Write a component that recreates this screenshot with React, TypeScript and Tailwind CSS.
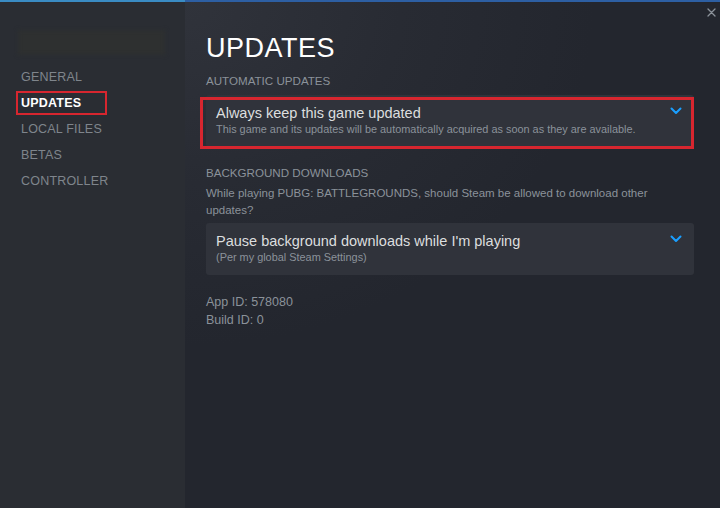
import React from "react"

const navItems = ["GENERAL", "UPDATES", "LOCAL FILES", "BETAS", "CONTROLLER"]

function Chevron() {
  return (
    <svg width="12" height="8" viewBox="0 0 12 8" className="mt-[3px] shrink-0">
      <path d="M1.5 1.5 L6 6 L10.5 1.5" fill="none" stroke="#1a9fff" strokeWidth="2" strokeLinecap="round" strokeLinejoin="round" />
    </svg>
  )
}

interface DropdownProps {
  title: string
  subtitle: string
  highlighted?: boolean
}

function Dropdown({ title, subtitle, highlighted }: DropdownProps) {
  return (
    <div className="relative">
      <div className="flex items-start justify-between bg-[#30333b] rounded-[3px] pl-[10px] pr-[12px] pt-[9px] pb-[11px]">
        <div className="flex flex-col">
          <span className="text-[14.5px] leading-[18px] text-[#dcdedf]">{title}</span>
          <span className="text-[10.9px] leading-[14px] text-[#8b929a]">{subtitle}</span>
        </div>
        <Chevron />
      </div>
      {highlighted && (
        <div className="absolute -left-[6px] top-[2px] right-0 bottom-[-2px] border-[3px] border-[#d7262f]" />
      )}
    </div>
  )
}

export default function App() {
  return (
    <div
      className="relative flex w-[720px] h-[508px] overflow-hidden bg-[#23262e] select-none"
      style={{ fontFamily: '"Liberation Sans", Arial, sans-serif' }}
    >
      {/* Sidebar */}
      <aside className="flex flex-col w-[185px] shrink-0 bg-[#2a2d33] border-t-2 border-[#3a8cc4]">
        {/* blurred title area */}
        <div className="mt-[28px] ml-[18px] w-[147px] h-[25px] bg-[#2e3030] blur-[2px]" />
        <nav className="flex flex-col mt-[9px]">
          {navItems.map((item) => {
            const active = item === "UPDATES"
            return (
              <div key={item} className="relative h-[26px] flex items-center pl-[21px]">
                <span
                  className={
                    active
                      ? "text-[12.5px] font-bold text-white tracking-[0.2px]"
                      : "text-[12.5px] text-[#7f858c] tracking-[0.2px]"
                  }
                >
                  {item}
                </span>
                {active && (
                  <div className="absolute left-[16px] top-[1px] w-[91px] h-[24px] border-2 border-[#d7262f]" />
                )}
              </div>
            )
          })}
        </nav>
      </aside>

      {/* Main */}
      <main className="flex-1 flex flex-col border-t-2 border-[#2d5fa3] bg-[radial-gradient(ellipse_90%_80%_at_0%_0%,#30333b_0%,#282b33_45%,#23262e_85%)] pl-[21px] pr-[26px]">
        <h1 className="mt-[30px] text-[27px] leading-[32px] text-white tracking-[0.5px]">UPDATES</h1>
        <div className="mt-[9px] text-[11.6px] leading-[16px] text-[#8b929a]">AUTOMATIC UPDATES</div>
        <div className="mt-[6px]">
          <Dropdown
            title="Always keep this game updated"
            subtitle="This game and its updates will be automatically acquired as soon as they are available."
            highlighted
          />
        </div>
        <div className="mt-[18px] text-[11.6px] leading-[16px] text-[#8b929a]">BACKGROUND DOWNLOADS</div>
        <p className="mt-[4px] text-[11.5px] leading-[17px] text-[#8b929a] pr-[40px]">
          While playing PUBG: BATTLEGROUNDS, should Steam be allowed to download other updates?
        </p>
        <div className="mt-[4px]">
          <Dropdown title="Pause background downloads while I'm playing" subtitle="(Per my global Steam Settings)" />
        </div>
        <div className="mt-[18px] flex flex-col text-[12.5px] leading-[18px] text-[#8b929a]">
          <span>App ID: 578080</span>
          <span>Build ID: 0</span>
        </div>
      </main>

      {/* Close */}
      <button className="absolute right-[3px] top-[6px] w-[12px] h-[12px] flex items-center justify-center">
        <svg width="9" height="9" viewBox="0 0 9 9">
          <path d="M1 1 L8 8 M8 1 L1 8" stroke="#8b929a" strokeWidth="1.3" strokeLinecap="round" />
        </svg>
      </button>
    </div>
  )
}
